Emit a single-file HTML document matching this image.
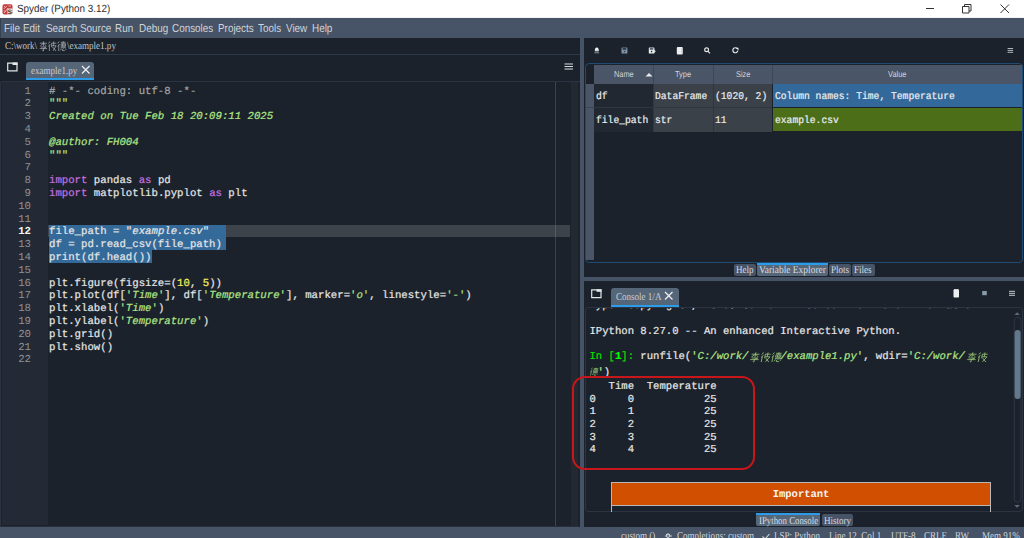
<!DOCTYPE html>
<html><head><meta charset="utf-8">
<style>
*{margin:0;padding:0;box-sizing:border-box}
html,body{text-rendering:geometricPrecision;width:1024px;height:538px;overflow:hidden;background:#1b222b;font-family:"Liberation Sans",sans-serif;position:relative}
.a{position:absolute}
.t{position:absolute;white-space:pre}
.serif{font-family:"Liberation Serif",serif}
.mono{font-family:"Liberation Mono",monospace}
.sx{position:absolute;white-space:pre;font-family:"Liberation Serif",serif;font-size:10.5px;transform-origin:0 0;transform:scaleX(.86)}
#menubar span{position:absolute;top:22.7px;font-size:11.5px;color:#d0d4d9;white-space:nowrap;transform-origin:0 0;transform:scaleX(.86)}
.code{-webkit-text-stroke:0.2px currentColor;position:absolute;left:49px;top:85.6px;font-family:"Liberation Mono",monospace;font-size:10.68px;line-height:12.79px;color:#e6e6e6;white-space:pre}
.lns{position:absolute;left:2px;width:29px;top:85.6px;font-family:"Liberation Mono",monospace;font-size:10.68px;line-height:12.79px;color:#8e9296;text-align:right;white-space:pre}
.k{color:#c670e0}
.s{color:#b0e686}
.si{color:#b0e686;font-style:italic}
.c{color:#a6a6a6}
.n{color:#faed5c}
.tab2{position:absolute;height:12px;background:#475467;border-radius:2px}
.con{-webkit-text-stroke:0.2px currentColor;position:absolute;left:589.5px;font-family:"Liberation Mono",monospace;font-size:10.6px;color:#e8e8e8;white-space:pre}
.vt{-webkit-text-stroke:0.2px currentColor;position:absolute;font-family:"Liberation Mono",monospace;font-size:10.4px;color:#eceff1;white-space:pre;transform-origin:0 0;transform:scaleX(.93)}
.hd{margin-top:-1.5px;position:absolute;font-size:8.6px;color:#d0d4d9;white-space:pre;transform-origin:0 0;transform:scaleX(.86)}
.cj{display:inline-block;vertical-align:-2px}
</style></head><body>
<svg width="0" height="0" style="position:absolute">
<defs>
<g id="li"><path d="M1 2.2h8M5 0.3v5M5 2.2l-3.5 2.8M5 2.2l3.5 2.8M2 6h6l-3 1.5M0.8 7.6h8.4M5 7v3l-1.2-0.6"/></g>
<g id="bi"><path d="M2.2 0.5l-1.7 2M2.6 3l-2.1 2.5M1.6 4.3v5.7M4 2.2h5.5M6.5 0.4v4.5M4.2 2.2v4M4.3 4.8h5l-3.5 5M5.2 6l4 4"/></g>
<g id="de"><path d="M2.2 0.5l-1.7 2M2.6 3l-2.1 2.5M1.6 4.3v5.7M4 1.3h5.5M6.7 0.3v2M4.3 2.8h5v2.4h-5zM5.9 2.8v2.4M7.6 2.8v2.4M3.8 6.3h6M4.5 7.3l-0.7 2M6 7.8v1.8h2.5M7 7.2l0.7 0.8M9.3 7.5l0.5 1.3"/></g>
</defs>
</svg>
<!-- title bar -->
<div class="a" style="left:0;top:0;width:1024px;height:18px;background:#fff"></div>
<div class="a" style="left:0;top:16.8px;width:1024px;height:1.2px;background:#f1f2f3"></div>
<svg class="a" style="left:2px;top:3.5px" width="11" height="11" viewBox="0 0 11 11">
<rect x="0.5" y="0.3" width="10" height="10.2" rx="1.8" fill="#c23a3c"/>
<path d="M5.5 4.5h5v4.5a1.5 1.5 0 0 1-1.5 1.5h-3.5z" fill="#f2f2f2"/>
<path d="M1.8 2l1.5 1.5M5 1.8l-3 3M6.5 2h2.5M2 6.5l1.5 1.5M4.5 6l-2.5 3M6 4l-1.5 2" stroke="#f0c8c8" stroke-width="0.9"/>
<text x="5.6" y="10.2" font-family="Liberation Sans" font-size="8.5" font-weight="bold" fill="#3a3a3a">s</text>
</svg>
<div class="t" style="left:16.5px;top:3px;font-size:10.5px;color:#2e2e2e;transform-origin:0 0;transform:scaleX(.94)">Spyder (Python 3.12)</div>
<svg class="a" style="left:924px;top:3px" width="90" height="12">
<path d="M2 5.5h8" stroke="#333" stroke-width="1"/>
<path d="M38.5 3.5h6.5v6.5h-6.5z M40.5 3.5v-2h6.5v6.5h-2" fill="none" stroke="#333" stroke-width="1"/>
<path d="M76.5 1.5l8.5 8.5M85 1.5l-8.5 8.5" stroke="#333" stroke-width="1"/>
</svg>
<!-- menubar -->
<div id="menubar">
<div class="a" style="left:0;top:18px;width:1024px;height:20px;background:#475366"></div>
<div class="a" style="left:0;top:18px;width:1px;height:20px;background:#38424f"></div>
<span style="left:3.5px">File</span><span style="left:23px">Edit</span><span style="left:45.5px">Search</span><span style="left:79.8px">Source</span><span style="left:115px">Run</span><span style="left:138.5px">Debug</span><span style="left:171.8px">Consoles</span><span style="left:217.5px">Projects</span><span style="left:258px">Tools</span><span style="left:285.7px">View</span><span style="left:312px">Help</span>
</div>
<!-- path bar -->
<div class="a" style="left:0;top:53.5px;width:580px;height:1px;background:#2d3946"></div>
<div class="sx" style="left:5px;top:41px;color:#c3c7cc">C:\work\</div>
<svg class="a" style="left:38.6px;top:41px" width="28" height="11"><g fill="none" stroke="#a9aeb4" stroke-width="0.8" transform="scale(0.88 1)"><use href="#li"/><use href="#bi" x="10.2"/><use href="#de" x="20.8"/></g></svg>
<div class="sx" style="left:66.5px;top:41px;color:#c3c7cc">\example1.py</div>
<!-- splitters -->
<div class="a" style="left:580px;top:38px;width:4px;height:489px;background:#465265"></div>
<div class="a" style="left:584px;top:277px;width:440px;height:4px;background:#465265"></div>
<!-- editor tabbar -->
<svg class="a" style="left:6px;top:61px" width="13" height="11"><path d="M1.7 2.1h9.3v7.7h-9.3z" fill="none" stroke="#e4e6e8" stroke-width="1.2"/><path d="M6.5 1.5h5v2.5h-5z" fill="#e4e6e8"/></svg>
<div class="a" style="left:26px;top:61.5px;width:68.3px;height:18.5px;background:#566679;border-radius:3px 3px 0 0"></div>
<div class="a" style="left:26px;top:78px;width:68.3px;height:2px;background:#2d9ce8"></div>
<div class="sx" style="left:30.5px;top:65.5px;color:#c9ced4">example1.py</div>
<svg class="a" style="left:80.5px;top:65px" width="10" height="10"><path d="M1 1l7.5 7.5M8.5 1l-7.5 7.5" stroke="#f0f2f4" stroke-width="1.2"/></svg>
<svg class="a" style="left:564px;top:63px" width="10" height="8"><path d="M0.5 1h8.5M0.5 3.5h8.5M0.5 6h8.5" stroke="#d8dbdf" stroke-width="1.1"/></svg>
<!-- editor frame -->
<div class="a" style="left:0;top:80.5px;width:580px;height:446px;border:1px solid #2b3440;border-right:none;border-bottom:none;border-radius:3px 0 0 0;background:#1b222b"></div>
<div class="a" style="left:2px;top:82px;width:45.5px;height:443px;background:#232a35"></div>
<div class="a" style="left:570.5px;top:82px;width:7.5px;height:443.5px;background:#222931"></div>
<div class="a" style="left:0;top:525.5px;width:579px;height:1.5px;background:#27303a"></div>
<!-- current line + selection -->
<div class="a" style="left:47.5px;top:224.8px;width:522.5px;height:12.6px;background:#3c434b"></div>
<div class="a" style="left:49px;top:224.8px;width:176.7px;height:25.6px;background:#346a9a"></div>
<div class="a" style="left:49px;top:250.4px;width:103px;height:12.6px;background:#346a9a"></div>
<div class="a" style="left:555px;top:82px;width:1px;height:443.5px;background:#3a434d"></div>
<div class="a" style="left:555px;top:224.8px;width:1px;height:12.6px;background:#535b63"></div>
<div class="lns">1
2
3
4
5
6
7
8
9
10
11
<b style="color:#f4f4f4">12</b>
13
14
15
16
17
18
19
20
21
22</div>
<div class="code"><span class="c"># -*- coding: utf-8 -*-</span>
<span class="s">"""</span>
<span class="si">Created on Tue Feb 18 20:09:11 2025</span>

<span class="si">@author: FH004</span>
<span class="s">"""</span>

<span class="k">import</span> pandas <span class="k">as</span> pd
<span class="k">import</span> matplotlib.pyplot <span class="k">as</span> plt


file_path = "<i>example.csv</i>"
df = pd.read_csv(file_path)
print(df.head())

plt.figure(figsize=(<span class="n">10</span>, <span class="n">5</span>))
plt.plot(df[<span class="s">'</span><span class="si">Time</span><span class="s">'</span>], df[<span class="s">'</span><span class="si">Temperature</span><span class="s">'</span>], marker=<span class="s">'</span><span class="si">o</span><span class="s">'</span>, linestyle=<span class="s">'</span><span class="si">-</span><span class="s">'</span>)
plt.xlabel(<span class="s">'</span><span class="si">Time</span><span class="s">'</span>)
plt.ylabel(<span class="s">'</span><span class="si">Temperature</span><span class="s">'</span>)
plt.grid()
plt.show()
</div>
<!-- status bar -->
<div class="a" style="left:0;top:527px;width:1024px;height:11px;background:#475366"></div>
<div class="sx" style="left:621px;top:531px;color:#d4d8dd">custom ()</div>
<svg class="a" style="left:665px;top:532.5px" width="8" height="7"><g fill="none" stroke="#d4d8dd" stroke-width="1"><circle cx="3" cy="3" r="1.5"/><path d="M3 0v1M3 5v2M0 3h1M5 3h2M1 1l1 1M5 1l-1 1"/></g></svg>
<div class="sx" style="left:676.5px;top:531px;color:#d4d8dd">Completions: custom</div>
<svg class="a" style="left:762px;top:532.5px" width="8" height="7"><path d="M0.5 3.5l2.5 2.5 4.5-5" fill="none" stroke="#d4d8dd" stroke-width="1.1"/></svg>
<div class="sx" style="left:773.5px;top:531px;color:#d4d8dd">LSP: Python</div>
<div class="sx" style="left:829px;top:531px;color:#d4d8dd">Line 12, Col 1</div>
<div class="sx" style="left:890.5px;top:531px;color:#d4d8dd">UTF-8</div>
<div class="sx" style="left:923.5px;top:531px;color:#d4d8dd">CRLF</div>
<div class="sx" style="left:955px;top:531px;color:#d4d8dd">RW</div>
<div class="sx" style="left:982px;top:531px;color:#d4d8dd">Mem 91%</div>

<!-- RIGHT: variable explorer toolbar -->
<svg class="a" style="left:584px;top:38px" width="440" height="25">
<g fill="#eceef0">
<path d="M10.8 12.8c0-1.5 0.4-3.3 2-3.3s2 1.8 2 3.3z"/><rect x="10.8" y="12.5" width="4" height="0.8"/><rect x="10.5" y="14.3" width="4.6" height="1" fill="#8a939d"/>
<rect x="37.5" y="9.4" width="5.9" height="6.2" rx="0.7" fill="#8094a7"/><rect x="38.6" y="9.8" width="3.7" height="2" fill="#2f3c49"/><rect x="39.8" y="12.8" width="1.4" height="1.5" fill="#2f3c49"/>
<rect x="64.8" y="9.4" width="5.6" height="6.2" rx="0.7"/><rect x="65.8" y="9.8" width="3.5" height="2" fill="#5a6470"/><rect x="66.9" y="12.8" width="1.4" height="1.5" fill="#1b222b"/><path d="M70 11.5l1.8 1.8-1.8 1.8z" fill="#d0d4d8"/>
<rect x="92.8" y="9" width="6" height="7.6" rx="1"/><rect x="97.6" y="10" width="1.2" height="6" fill="#b9bec4"/>
<circle cx="122.6" cy="11.8" r="1.9" fill="none" stroke="#e4e6e8" stroke-width="1.2"/><path d="M124 13.3l2 2" stroke="#e4e6e8" stroke-width="1.2"/>
<path d="M153.2 10.6a2.5 2.5 0 1 0 0.6 2" fill="none" stroke="#e4e6e8" stroke-width="1.2"/><path d="M151.8 9.8h2.7v2.7z"/>
</g>
<path d="M423.6 10.5h5.5M423.6 12.4h5.5M423.6 14.3h5.5" stroke="#c4c8cd" stroke-width="0.9"/>
</svg>
<!-- table frame -->
<div class="a" style="left:585px;top:63px;width:438px;height:200px;border:1px solid #1f4a72;border-radius:4px"></div>
<div class="a" style="left:586px;top:84px;width:8px;height:176px;background:#4a5567"></div>
<div class="a" style="left:586px;top:106.8px;width:8px;height:1px;background:#3a4452"></div>
<div class="a" style="left:594px;top:65px;width:428px;height:19px;background:#4a5668"></div>
<div class="a" style="left:653px;top:65px;width:1px;height:19px;background:#3b4656"></div>
<div class="a" style="left:713px;top:65px;width:1px;height:19px;background:#3b4656"></div>
<div class="a" style="left:772px;top:65px;width:1px;height:19px;background:#3b4656"></div>
<div class="a" style="left:594px;top:84px;width:59px;height:47.5px;background:#212832"></div>
<div class="a" style="left:654px;top:84px;width:118px;height:47.5px;background:#3b4148"></div>
<div class="a" style="left:653px;top:84px;width:1px;height:47.5px;background:#2f3740"></div>
<div class="a" style="left:713px;top:84px;width:1px;height:47.5px;background:#30363d"></div>
<div class="a" style="left:594px;top:107px;width:178px;height:1px;background:#2f3740"></div>
<div class="a" style="left:773px;top:84px;width:248.5px;height:23px;background:#33699a"></div>
<div class="a" style="left:773px;top:107.5px;width:248.5px;height:23.5px;background:#4c6e18"></div>
<div class="hd" style="left:613.5px;top:70.5px">Name</div>
<svg class="a" style="left:645px;top:72px" width="8" height="5"><path d="M0.5 4.5l3.5-3.5 3.5 3.5z" fill="#e8eaec"/></svg>
<div class="hd" style="left:675px;top:70.5px">Type</div>
<div class="hd" style="left:735.5px;top:70.5px">Size</div>
<div class="hd" style="left:888px;top:70.5px">Value</div>
<div class="vt" style="left:595.5px;top:90.5px">df</div>
<div class="vt" style="left:654.5px;top:90.5px">DataFrame</div>
<div class="vt" style="left:715px;top:90.5px">(1020, 2)</div>
<div class="vt" style="left:774.5px;top:90.5px">Column names: Time, Temperature</div>
<div class="vt" style="left:595.5px;top:114.5px">file_path</div>
<div class="vt" style="left:654.5px;top:114.5px">str</div>
<div class="vt" style="left:715px;top:114.5px">11</div>
<div class="vt" style="left:774.5px;top:114.5px">example.csv</div>
<!-- bottom tabs of VE -->
<div class="tab2" style="left:734.4px;top:264px;width:22px"></div>
<div class="tab2" style="left:757.3px;top:264px;width:70.3px;background:#566779"></div>
<div class="tab2" style="left:829px;top:264px;width:22px"></div>
<div class="tab2" style="left:852.2px;top:264px;width:22.5px"></div>
<div class="a" style="left:757.3px;top:262.5px;width:70.3px;height:2px;background:#2d9ce8"></div>
<div class="sx" style="left:736px;top:265.3px;color:#d9dde2">Help</div>
<div class="sx" style="left:759px;top:265.3px;color:#d9dde2;transform:scaleX(.9)">Variable Explorer</div>
<div class="sx" style="left:831px;top:265.3px;color:#d9dde2">Plots</div>
<div class="sx" style="left:854px;top:265.3px;color:#d9dde2">Files</div>

<!-- console tabbar -->
<svg class="a" style="left:590px;top:288px" width="13" height="11"><path d="M1.7 1.9h9.3v7.7h-9.3z" fill="none" stroke="#e4e6e8" stroke-width="1.2"/><path d="M6.5 1.3h5v2.5h-5z" fill="#e4e6e8"/></svg>
<div class="a" style="left:611px;top:288px;width:67.5px;height:19px;background:#566679;border-radius:3px 3px 0 0"></div>
<div class="a" style="left:611px;top:304.8px;width:67.5px;height:2px;background:#2d9ce8"></div>
<div class="sx" style="left:615.5px;top:292px;color:#c9ced4">Console 1/A</div>
<svg class="a" style="left:664.2px;top:291.3px" width="10" height="10"><path d="M1 1l7.5 7.5M8.5 1l-7.5 7.5" stroke="#f0f2f4" stroke-width="1.2"/></svg>
<svg class="a" style="left:950px;top:286px" width="70" height="14">
<rect x="3.5" y="3.5" width="5.5" height="8" rx="0.8" fill="#eceef0"/><rect x="4" y="3" width="4.5" height="1" fill="#cfd3d7"/>
<rect x="32.2" y="5" width="4.6" height="4.2" fill="#8799aa"/>
<path d="M59 5.3h6M59 7.3h6M59 9.3h6" stroke="#c4c8cd" stroke-width="1"/>
</svg>
<!-- console frame -->
<div class="a" style="left:585px;top:307px;width:438px;height:205px;border:1px solid #2b3440;border-radius:3px"></div>
<!-- clipped first line -->
<div class="a" style="left:586px;top:308px;width:425px;height:4px;overflow:hidden">
<div class="con" style="left:3.5px;top:-8.5px">Type "copyright", "credits" or "license" for more information.</div>
</div>
<div class="con" style="top:325.8px">IPython 8.27.0 -- An enhanced Interactive Python.</div>
<div class="con" style="top:351.2px"><span style="color:#00e300">In [</span><span style="color:#00ff00;font-weight:bold">1</span><span style="color:#00e300">]:</span> runfile(<span class="s">'</span><span class="si">C:/work/</span></div>
<svg class="a" style="left:748.5px;top:351.5px" width="33" height="11"><g fill="none" stroke="#97c478" stroke-width="0.8" transform="skewX(-12) translate(2 0)"><use href="#li"/><use href="#bi" x="10.7"/><use href="#de" x="21.4"/></g></svg>
<div class="con" style="left:780.5px;top:351.2px"><span class="si">/example1.py</span><span class="s">'</span>, wdir=<span class="s">'</span><span class="si">C:/work/</span></div>
<svg class="a" style="left:966px;top:351.5px" width="24" height="11"><g fill="none" stroke="#97c478" stroke-width="0.8" transform="skewX(-12) translate(2 0)"><use href="#li"/><use href="#bi" x="10.7"/></g></svg>
<svg class="a" style="left:589px;top:367px" width="11" height="10"><g fill="none" stroke="#97c478" stroke-width="0.8" transform="skewX(-12) translate(2 0.5) scale(0.8)"><use href="#de"/></g></svg>
<div class="con" style="left:597.5px;top:366.6px"><span class="s">'</span>)</div>
<div class="con" style="top:381.1px;line-height:12.66px">   Time  Temperature
0     0           25
1     1           25
2     2           25
3     3           25
4     4           25</div>
<!-- red annotation -->
<div class="a" style="left:571.5px;top:376px;width:183px;height:94px;border:2px solid #c8161b;border-radius:13px"></div>
<!-- Important banner -->
<div class="a" style="left:611px;top:482px;width:380px;height:29.5px;border:1px solid #b8b8b8;border-bottom:none"></div>
<div class="a" style="left:612px;top:483px;width:378px;height:21.5px;background:#d14f00"></div>
<div class="a" style="left:612px;top:504.5px;width:378px;height:1px;background:#b8b8b8"></div>
<div class="t mono" style="left:772.7px;top:488.7px;font-size:10.5px;font-weight:bold;color:#f5f5f5">Important</div>
<!-- console scrollbar -->
<svg class="a" style="left:1013px;top:310px" width="9" height="200">
<path d="M1.3 5h5.6l-2.8-2.8z" fill="#5c6b7c"/>
<rect x="1.3" y="7.2" width="6.6" height="185" rx="3.3" fill="none" stroke="#2e3843" stroke-width="1"/>
<rect x="1.6" y="20" width="6" height="69" rx="3" fill="#64788c"/>
<path d="M1.3 195h5.6l-2.8 2.8z" fill="#5c6b7c"/>
</svg>
<!-- bottom tabs console -->
<div class="tab2" style="left:756.2px;top:514px;width:63.8px;background:#566779;height:11.5px"></div>
<div class="a" style="left:756.2px;top:512.8px;width:63.8px;height:2px;background:#2d9ce8"></div>
<div class="tab2" style="left:821.5px;top:514px;width:31.2px;height:11.5px"></div>
<div class="sx" style="left:758.6px;top:515.8px;color:#d9dde2;transform:scaleX(.84)">IPython Console</div>
<div class="sx" style="left:823.5px;top:515.8px;color:#d9dde2">History</div>
</body></html>
